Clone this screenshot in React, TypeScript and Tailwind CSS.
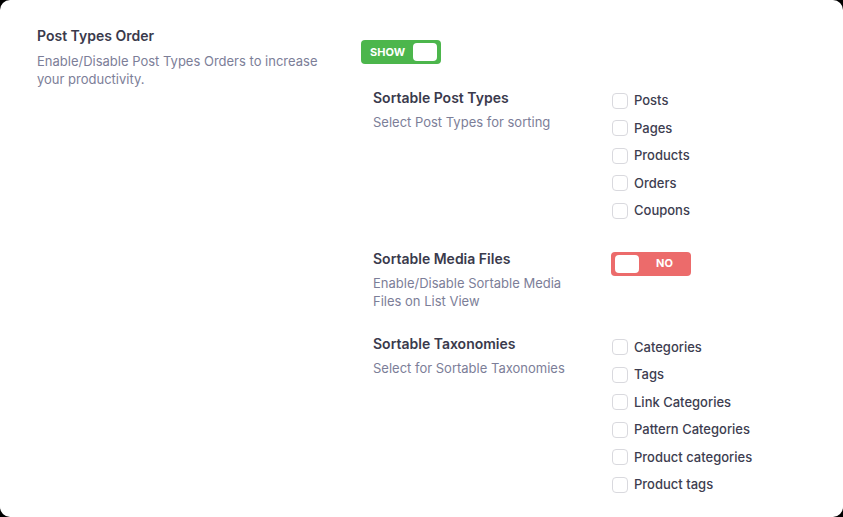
type CheckProps = { label: string }

const Check = ({ label }: CheckProps) => (
  <label className="flex h-[27.5px] items-center gap-[6px]">
    <span className="h-4 w-4 shrink-0 rounded-[4px] border border-[#d9d9de] bg-white" />
    <span className="text-[13px] font-medium text-[#3d3d50]">{label}</span>
  </label>
)

type SectionProps = {
  title: string
  desc: string
  children: React.ReactNode
}

const Section = ({ title, desc, children }: SectionProps) => (
  <div className="flex">
    <div className="w-[238px] shrink-0">
      <h3 className="text-[14px] font-semibold leading-5 text-[#3a3a4c]">{title}</h3>
      <p className="mt-[5px] w-[200px] text-[13px] leading-[18px] text-[#7c7e98]">{desc}</p>
    </div>
    <div>{children}</div>
  </div>
)

const App = () => {
  return (
    <div className="h-[517px] w-[843px] bg-black" style={{ fontFamily: "Inter, 'Noto Sans', sans-serif" }}>
      <div className="h-full w-full rounded-[10px] bg-white pl-[37px] pt-[26px]">
        <div className="flex">
          <div className="w-[324px] shrink-0">
            <h2 className="text-[14px] font-semibold leading-5 text-[#3a3a4c]">Post Types Order</h2>
            <p className="mt-[6px] text-[13px] leading-[18px] text-[#7c7e98]">
              Enable/Disable Post Types Orders to increase
              <br />
              your productivity.
            </p>
          </div>
          <div className="pt-[14px]">
            <div className="flex h-6 w-20 items-center justify-between rounded-[4px] bg-[#4cb64c] pl-[9px] pr-[4px]">
              <span className="text-[11px] font-bold text-white">SHOW</span>
              <span className="h-[18px] w-[24px] rounded-[4px] bg-white" />
            </div>

            <div className="ml-[12px] mt-[24px] flex flex-col gap-[24px]">
              <Section title="Sortable Post Types" desc="Select Post Types for sorting">
                <div className="-mt-[1px] ml-[1px] flex flex-col">
                  {["Posts", "Pages", "Products", "Orders", "Coupons"].map((l) => (
                    <Check key={l} label={l} />
                  ))}
                </div>
              </Section>

              <Section title="Sortable Media Files" desc="Enable/Disable Sortable Media Files on List View">
                <div className="mt-[3px] flex h-6 w-20 items-center rounded-[4px] bg-[#ec6b6b] pl-[4px]">
                  <span className="h-[18px] w-[24px] rounded-[4px] bg-white" />
                  <span className="ml-[17px] text-[11px] font-bold text-white">NO</span>
                </div>
              </Section>

              <Section title="Sortable Taxonomies" desc="Select for Sortable Taxonomies">
                <div className="ml-[1px] flex flex-col">
                  {["Categories", "Tags", "Link Categories", "Pattern Categories", "Product categories", "Product tags"].map(
                    (l) => (
                      <Check key={l} label={l} />
                    )
                  )}
                </div>
              </Section>
            </div>
          </div>
        </div>
      </div>
    </div>
  )
}

export default App
